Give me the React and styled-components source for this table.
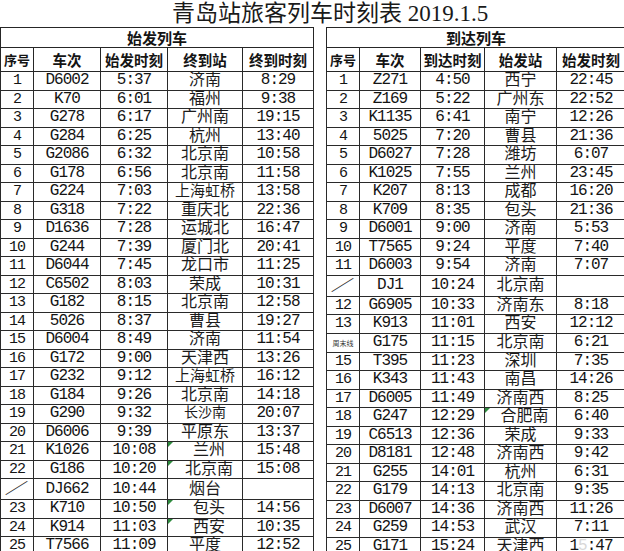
import React from 'react';
import styled, { createGlobalStyle } from 'styled-components';

const Global = createGlobalStyle`
  html, body { margin: 0; padding: 0; background: #fff; }
  body { width: 624px; height: 551px; overflow: hidden; }
`;

const Page = styled.div`
  width: 624px;
  height: 551px;
  overflow: hidden;
  background: #fff;
  color: #141414;
  font-family: "Liberation Mono", "Noto Sans CJK SC", monospace;
`;

const Title = styled.h1`
  margin: 0;
  height: 27px;
  line-height: 27px;
  padding-left: 36px;
  text-align: center;
  font-family: "Liberation Serif", "Noto Sans CJK SC", serif;
  font-size: 23px;
  font-weight: 400;
  color: #1a1a1a;
`;

const Tables = styled.div`
  display: flex;
  gap: 12px;
  align-items: flex-start;
`;

const Table = styled.table`
  border-collapse: collapse;
  table-layout: fixed;
  width: ${p => p.$width}px;
`;

const GroupHead = styled.th`
  height: 19px;
  padding: 0;
  border: 1px solid #262626;
  font-family: "Noto Sans CJK SC", sans-serif;
  font-size: 15px;
  font-weight: 700;
  line-height: 17px;
  text-align: center;
`;

const ColHead = styled.th`
  height: 23px;
  padding: 0;
  border: 1px solid #262626;
  font-family: "Noto Sans CJK SC", sans-serif;
  font-size: ${p => (p.$small ? 13 : 14.5)}px;
  font-weight: 700;
  line-height: 18px;
  text-align: center;
  white-space: nowrap;
`;

const Row = styled.tr`
  height: 18.5px;
`;

const Cell = styled.td`
  position: relative;
  padding: 0;
  border: 1px solid #2a2a2a;
  text-align: center;
  vertical-align: middle;
  white-space: nowrap;
  font-size: 16px;
  letter-spacing: -1px;
  line-height: 17px;
`;

const NoCell = styled(Cell)`
  font-size: 15px;
  letter-spacing: -1px;
`;

const StationCell = styled(Cell)`
  font-family: "Noto Sans CJK SC", sans-serif;
  font-size: ${p => p.$size}px;
  font-weight: 400;
  color: #1c1c1c;
  letter-spacing: 0;
  line-height: 13px;
  padding-bottom: 4px;
  padding-left: ${p => (p.$shift ? 8 : 0)}px;
`;

const Mark = styled.span`
  position: absolute;
  left: 0;
  top: 0;
  width: 0;
  height: 0;
  border-top: 5px solid #2e8b3e;
  border-right: 5px solid transparent;
`;

const Slash = styled.span`
  display: inline-block;
  font-family: "Noto Sans CJK SC", sans-serif;
  font-size: 15px;
  letter-spacing: 0;
  transform: scaleX(1.6);
  color: #333;
`;

const Tiny = styled.span`
  font-family: "Noto Sans CJK SC", sans-serif;
  font-size: 7px;
  letter-spacing: 0;
  color: #333;
`;

const Faded = styled.span`
  color: #d8d8d8;
`;

const departures = [
  ['1', 'D6002', '5:37', '济南', '8:29'],
  ['2', 'K70', '6:01', '福州', '9:38'],
  ['3', 'G278', '6:17', '广州南', '19:15'],
  ['4', 'G284', '6:25', '杭州', '13:40'],
  ['5', 'G2086', '6:32', '北京南', '10:58'],
  ['6', 'G178', '6:56', '北京南', '11:58'],
  ['7', 'G224', '7:03', '上海虹桥', '13:58'],
  ['8', 'G318', '7:22', '重庆北', '22:36'],
  ['9', 'D1636', '7:28', '运城北', '16:47'],
  ['10', 'G244', '7:39', '厦门北', '20:41'],
  ['11', 'D6044', '7:45', '龙口市', '11:25'],
  ['12', 'C6502', '8:03', '荣成', '10:31'],
  ['13', 'G182', '8:15', '北京南', '12:58'],
  ['14', '5026', '8:37', '曹县', '19:27'],
  ['15', 'D6004', '8:49', '济南', '11:54'],
  ['16', 'G172', '9:00', '天津西', '13:26'],
  ['17', 'G232', '9:12', '上海虹桥', '16:12'],
  ['18', 'G184', '9:26', '北京南', '14:18'],
  ['19', 'G290', '9:32', '长沙南', '20:07', { size: 14 }],
  ['20', 'D6006', '9:39', '平原东', '13:37'],
  ['21', 'K1026', '10:08', '兰州', '15:48', { mark: true }],
  ['22', 'G186', '10:20', '北京南', '15:08', { mark: true }],
  ['/', 'DJ662', '10:44', '烟台', ''],
  ['23', 'K710', '10:50', '包头', '14:56', { mark: true }],
  ['24', 'K914', '11:03', '西安', '10:35', { mark: true }],
  ['25', 'T7566', '11:09', '平度', '12:52'],
];

const arrivals = [
  ['1', 'Z271', '4:50', '西宁', '22:45'],
  ['2', 'Z169', '5:22', '广州东', '22:52'],
  ['3', 'K1135', '6:41', '南宁', '12:26'],
  ['4', '5025', '7:20', '曹县', '21:36'],
  ['5', 'D6027', '7:28', '潍坊', '6:07'],
  ['6', 'K1025', '7:55', '兰州', '23:45'],
  ['7', 'K207', '8:13', '成都', '16:20'],
  ['8', 'K709', '8:35', '包头', '21:36'],
  ['9', 'D6001', '9:00', '济南', '5:53'],
  ['10', 'T7565', '9:24', '平度', '7:40'],
  ['11', 'D6003', '9:54', '济南', '7:07'],
  ['/', 'DJ1', '10:24', '北京南', ''],
  ['12', 'G6905', '10:33', '济南东', '8:18'],
  ['13', 'K913', '11:01', '西安', '12:12'],
  ['weekend', 'G175', '11:15', '北京南', '6:21'],
  ['15', 'T395', '11:23', '深圳', '7:35'],
  ['16', 'K343', '11:43', '南昌', '14:26'],
  ['17', 'D6005', '11:49', '济南西', '8:25'],
  ['18', 'G247', '12:29', '合肥南', '6:40', { mark: true }],
  ['19', 'C6513', '12:36', '荣成', '9:33'],
  ['20', 'D8181', '12:48', '济南西', '9:42'],
  ['21', 'G255', '14:01', '杭州', '6:31'],
  ['22', 'G179', '14:13', '北京南', '9:35'],
  ['23', 'D6007', '14:36', '济南西', '11:26'],
  ['24', 'G259', '14:53', '武汉', '7:11'],
  ['25', 'G171', '15:24', '天津西', 'faded'],
];

function seqContent(no) {
  if (no === '/') return <Slash>／</Slash>;
  if (no === 'weekend') return <Tiny>周末线</Tiny>;
  return no;
}

function lastContent(v) {
  if (v === 'faded') return <>1<Faded>5</Faded>:47</>;
  return v;
}

function stationSize(name, opts) {
  if (opts.size) return opts.size;
  return name.length >= 4 ? 15 : 16;
}

function Timetable({ title, widths, heads, rows }) {
  const total = widths.reduce((a, b) => a + b, 0);
  return (
    <Table $width={total}>
      <colgroup>
        {widths.map((w, i) => <col key={i} style={{ width: w }} />)}
      </colgroup>
      <thead>
        <tr>
          <GroupHead colSpan={5}>{title}</GroupHead>
        </tr>
        <tr>
          {heads.map((h, i) => (
            <ColHead key={h} $small={i === 0}>{h}</ColHead>
          ))}
        </tr>
      </thead>
      <tbody>
        {rows.map((r, i) => {
          const opts = r[5] || {};
          return (
            <Row key={i}>
              <NoCell>{seqContent(r[0])}</NoCell>
              <Cell>{r[1]}</Cell>
              <Cell>{r[2]}</Cell>
              <StationCell $shift={opts.mark} $size={stationSize(r[3], opts)}>
                {opts.mark && <Mark />}
                {r[3]}
              </StationCell>
              <Cell>{lastContent(r[4])}</Cell>
            </Row>
          );
        })}
      </tbody>
    </Table>
  );
}

export default function App() {
  return (
    <Page>
      <Global />
      <Title>青岛站旅客列车时刻表 2019.1.5</Title>
      <Tables>
        <Timetable
          title="始发列车"
          widths={[33, 67, 67, 75, 71]}
          heads={['序号', '车次', '始发时刻', '终到站', '终到时刻']}
          rows={departures}
        />
        <Timetable
          title="到达列车"
          widths={[33, 61, 64, 72, 69]}
          heads={['序号', '车次', '到达时刻', '始发站', '始发时刻']}
          rows={arrivals}
        />
      </Tables>
    </Page>
  );
}
